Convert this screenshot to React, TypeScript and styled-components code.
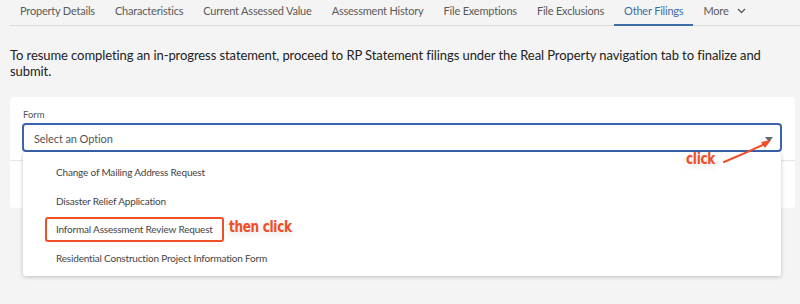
import React from 'react';
import styled, { createGlobalStyle } from 'styled-components';

const GlobalStyle = createGlobalStyle`
  html, body {
    margin: 0;
    padding: 0;
    background: #f4f4f4;
  }
  body {
    font-family: Lato, "Open Sans", sans-serif;
    color: #333;
  }
`;

const Page = styled.div`
  position: relative;
  width: 800px;
  height: 304px;
  overflow: hidden;
  padding: 0 5px 0 10px;
  box-sizing: border-box;
`;

const TabBar = styled.nav`
  display: flex;
  align-items: flex-end;
  height: 26px;
  margin-right: -5px;
  border-bottom: 1px solid #dcdcdc;
  box-sizing: border-box;
`;

const Tab = styled.div<{ $active?: boolean }>`
  display: flex;
  align-items: center;
  gap: 8px;
  height: 24px;
  padding: 0 10px 5px;
  margin-bottom: -1px;
  font-size: 11px;
  letter-spacing: -0.2px;
  line-height: 1;
  color: ${({ $active }) => ($active ? '#3a6ea5' : '#5a5a5a')};
  border-bottom: 2px solid ${({ $active }) => ($active ? '#3a6ea5' : 'transparent')};
  box-sizing: border-box;
  white-space: nowrap;
`;

const Notice = styled.p`
  margin: 21px 0 0;
  font-size: 13px;
  letter-spacing: -0.08px;
  line-height: 16px;
  color: #222;
`;

const Card = styled.section`
  margin-top: 18px;
  background: #fff;
  border-radius: 4px;
  height: 111px;
  display: flex;
  flex-direction: column;
`;

const CardBody = styled.div`
  padding: 12px 13px 8px 12px;
  border-bottom: 1px solid #e6e6e6;
`;

const Label = styled.label`
  display: block;
  font-size: 9.5px;
  color: #555;
  margin: 0 0 3px 1px;
`;

const SelectWrap = styled.div`
  position: relative;
`;

const SelectBox = styled.div`
  height: 29px;
  border: 2px solid #3b63b0;
  border-radius: 4px;
  box-sizing: border-box;
  display: flex;
  align-items: center;
  justify-content: space-between;
  padding: 1px 7px 0 10px;
  font-size: 11px;
  letter-spacing: -0.1px;
  color: #555;
`;

const Caret = styled.span`
  width: 0;
  height: 0;
  border-left: 4px solid transparent;
  border-right: 4px solid transparent;
  border-top: 5px solid #666;
  margin-top: 2px;
`;

const Menu = styled.ul`
  position: absolute;
  top: 29px;
  left: 1px;
  right: 1px;
  margin: 0;
  padding: 5px 0;
  list-style: none;
  background: #fff;
  border-radius: 3px;
  box-shadow: 0 1px 4px rgba(0, 0, 0, 0.22);
  z-index: 2;
`;

const MenuItem = styled.li`
  height: 28.5px;
  display: flex;
  align-items: center;
  padding: 2px 0 0 33px;
  box-sizing: border-box;
  font-size: 10px;
  letter-spacing: -0.18px;
  color: #444;
`;

const Highlight = styled.span`
  position: relative;
  &::before {
    content: '';
    position: absolute;
    left: -11px;
    right: -11px;
    top: -6px;
    bottom: -7px;
    border: 2px solid #f04e27;
    border-radius: 3px;
  }
`;

const Note = styled.span`
  position: absolute;
  font-family: "DejaVu Sans Condensed", "DejaVu Sans", sans-serif;
  font-weight: bold;
  font-size: 16px;
  letter-spacing: -0.4px;
  color: #f04e27;
  text-shadow: 0 3px 8px rgba(0, 0, 0, 0.12);
  transform: scaleX(0.84);
  transform-origin: left center;
  white-space: nowrap;
`;

const ThenClick = styled(Note)`
  left: calc(100% + 16px);
  top: -6px;
`;

const ClickNote = styled(Note)`
  left: 686px;
  top: 149px;
  z-index: 3;
`;

const Arrow = styled.svg`
  position: absolute;
  left: 720px;
  top: 136px;
  z-index: 3;
`;

const tabs = [
  'Property Details',
  'Characteristics',
  'Current Assessed Value',
  'Assessment History',
  'File Exemptions',
  'File Exclusions',
  'Other Filings',
];

const options = [
  'Change of Mailing Address Request',
  'Disaster Relief Application',
  'Informal Assessment Review Request',
  'Residential Construction Project Information Form',
];

const App: React.FC = () => {
  return (
    <Page>
      <GlobalStyle />
      <TabBar>
        {tabs.map((t) => (
          <Tab key={t} $active={t === 'Other Filings'}>
            {t}
          </Tab>
        ))}
        <Tab>
          More
          <svg width="9" height="6" viewBox="0 0 9 6">
            <path d="M1 1l3.5 3.5L8 1" fill="none" stroke="#5a5a5a" strokeWidth="1.3" />
          </svg>
        </Tab>
      </TabBar>

      <Notice>
        To resume completing an in-progress statement, proceed to RP Statement filings under the Real Property
        navigation tab to finalize and submit.
      </Notice>

      <Card>
        <CardBody>
          <Label>Form</Label>
          <SelectWrap>
            <SelectBox>
              Select an Option
              <Caret />
            </SelectBox>
            <Menu>
              {options.map((o, i) => (
                <MenuItem key={o}>
                  {i === 2 ? (
                    <Highlight>
                      {o}
                      <ThenClick>then click</ThenClick>
                    </Highlight>
                  ) : (
                    o
                  )}
                </MenuItem>
              ))}
            </Menu>
          </SelectWrap>
        </CardBody>
      </Card>

      {/* annotation pointing at the caret */}
      <ClickNote>click</ClickNote>
      <Arrow width="56" height="30" viewBox="0 0 56 30">
        <path d="M4 26 Q26 17 47 7" fill="none" stroke="#f04e27" strokeWidth="2" strokeLinecap="round" />
        <path d="M51 4 L41 6 L45 12 Z" fill="#f04e27" />
      </Arrow>
    </Page>
  );
};

export default App;
